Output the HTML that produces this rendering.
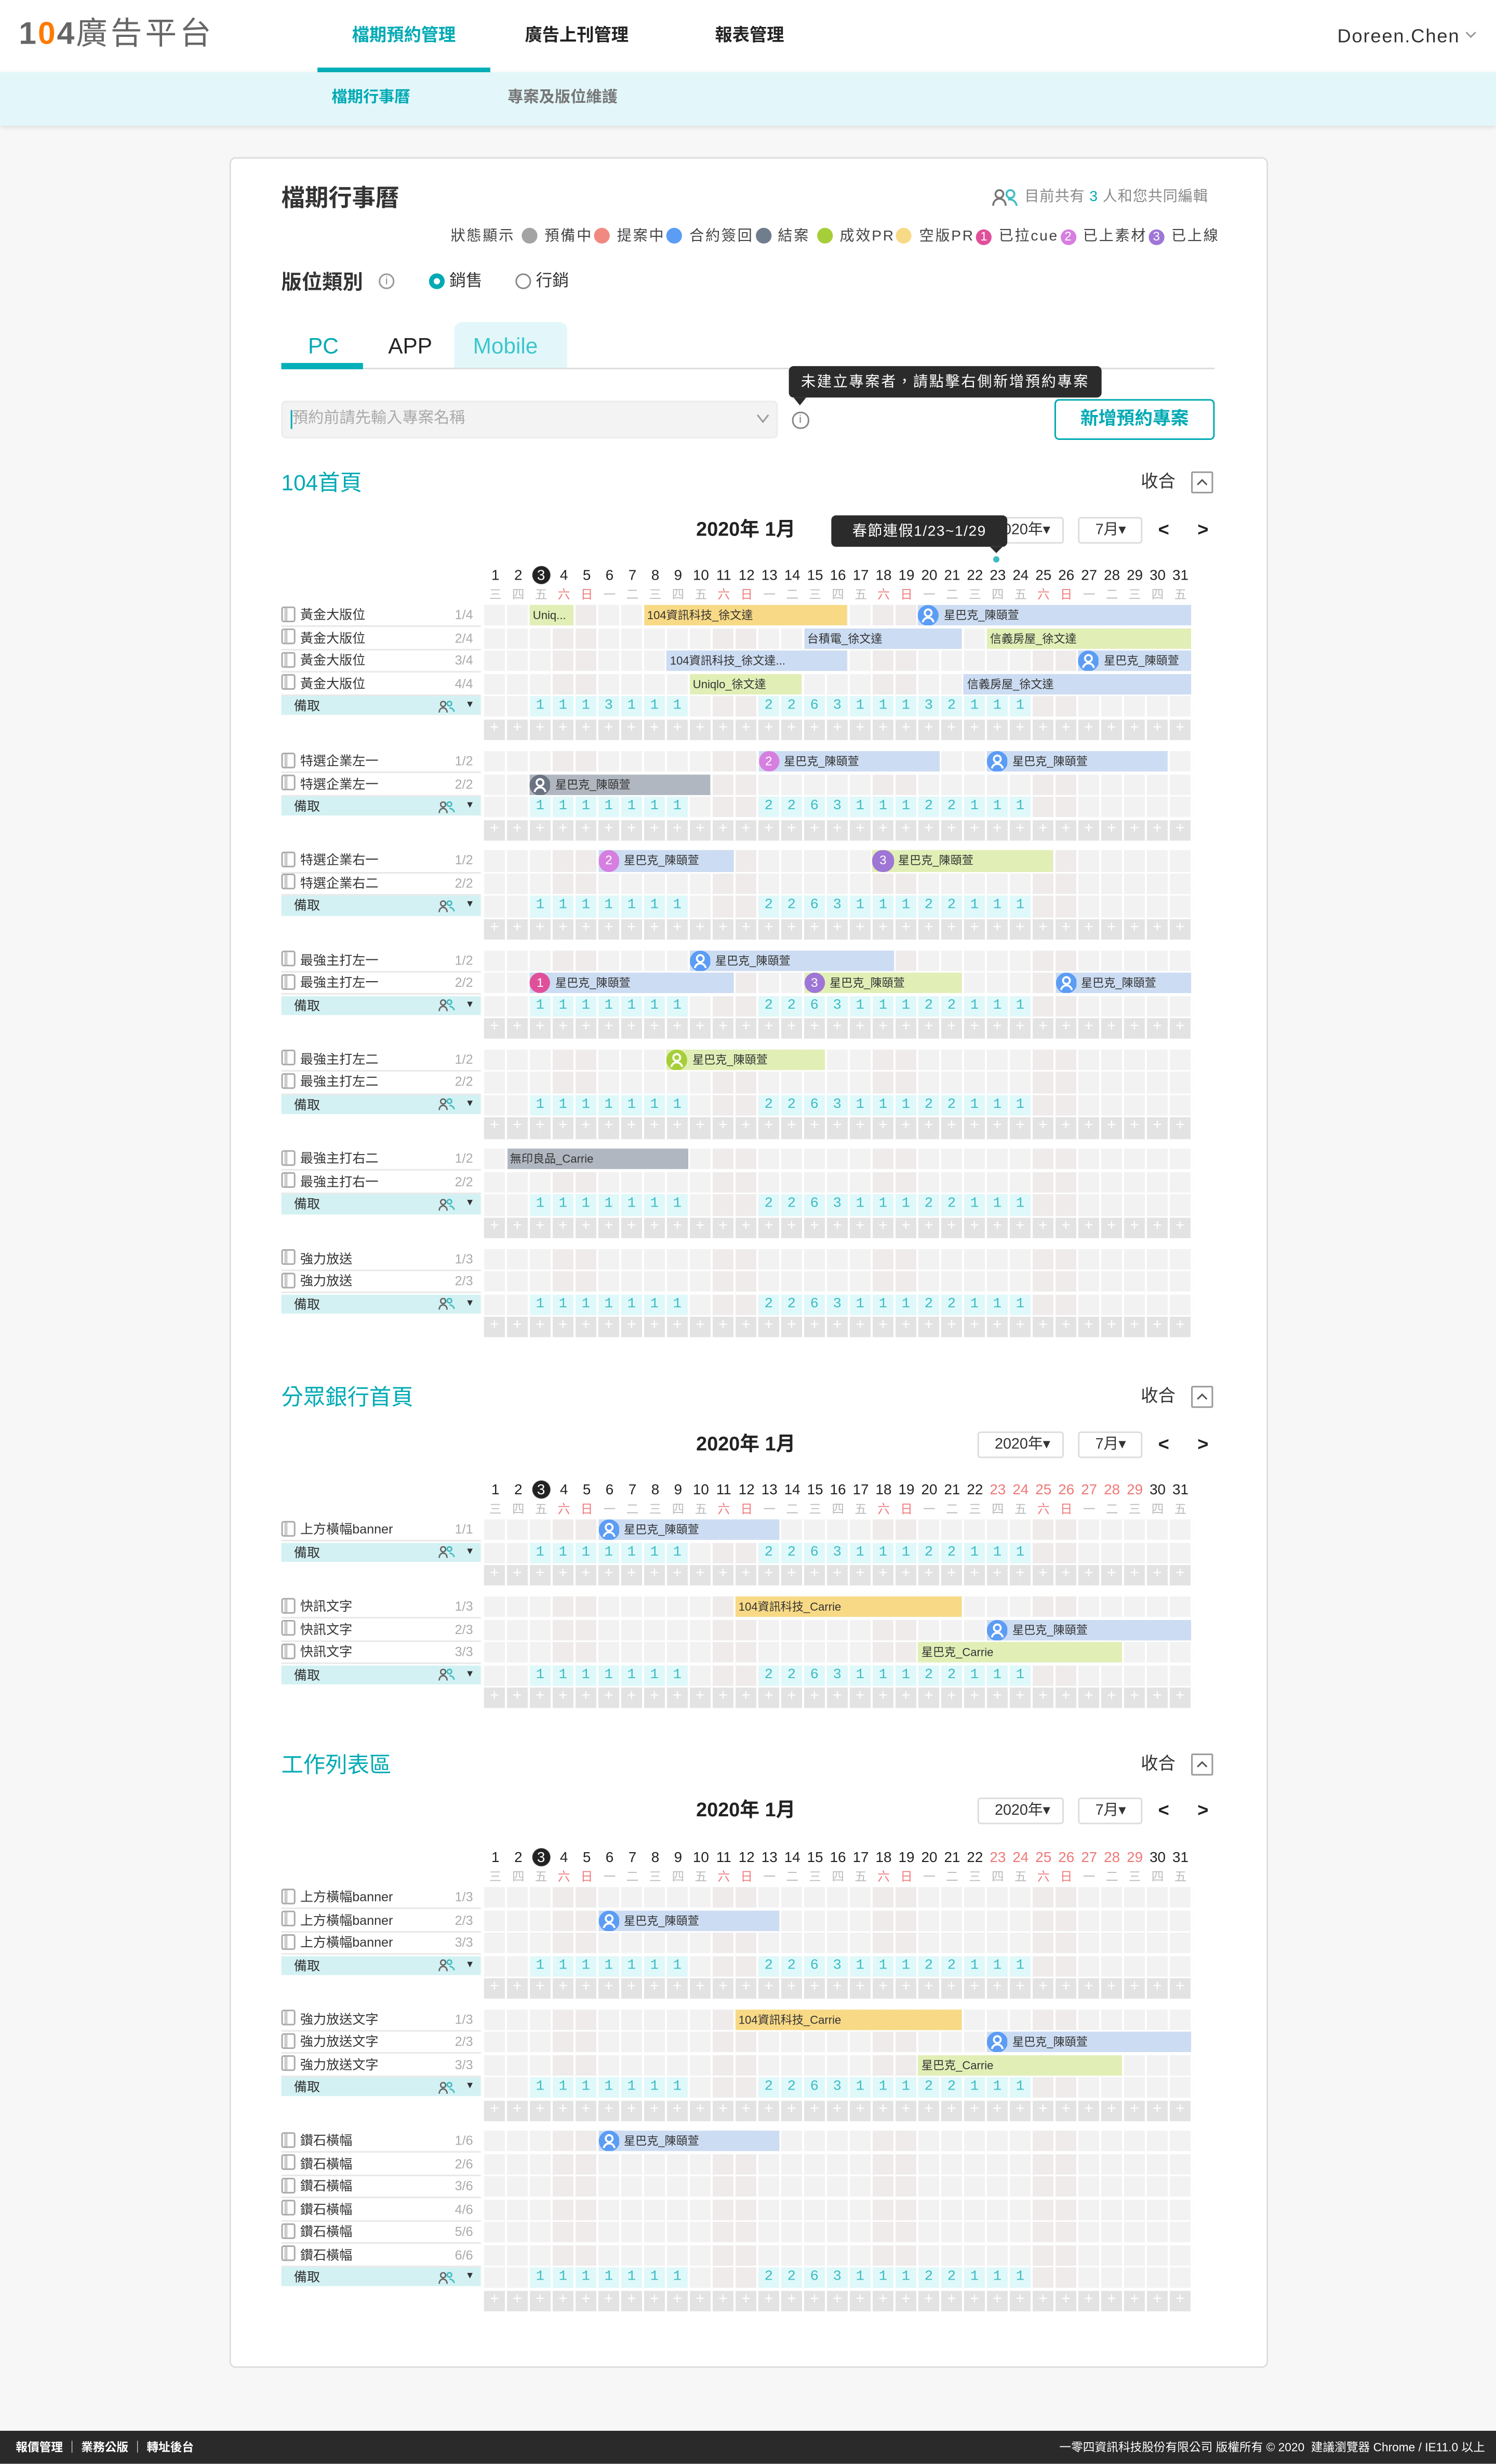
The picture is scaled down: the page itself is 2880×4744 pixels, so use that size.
<!DOCTYPE html>
<html><head><meta charset="utf-8">
<style>
html,body{margin:0;padding:0;width:2880px;height:4744px;overflow:hidden;background:#f7f7f7}
#w{position:absolute;left:0;top:0;width:952px;height:1568.2px;transform:scale(3.02521);transform-origin:0 0;background:#f7f7f7;font-family:"Liberation Sans","Noto Sans CJK TC",sans-serif;color:#333}
.a{position:absolute;white-space:nowrap}
.hdr{left:0;top:0;width:952px;height:46px;background:#fff}
.sub{left:0;top:46px;width:952px;height:34px;background:#e3f7fa;box-shadow:0 1px 3px rgba(0,0,0,.12)}
.card{left:146px;top:100px;width:659px;height:1405px;background:#fff;border:1px solid #dedede;border-radius:4px}
.foot{left:0;top:1547px;width:952px;height:21.2px;background:#2a2a2a;color:#fff;font-size:7.5px;line-height:21px}
.sect{color:#00aab4;font-size:14px;line-height:16px}
.col{font-size:11px;line-height:14px;color:#333}
.colb{width:14px;height:14px;border:1px solid #999;border-radius:1px;box-sizing:border-box;text-align:center;font-size:9px;line-height:14px;color:#666}
.mon{font-size:12.5px;line-height:16px;font-weight:bold;color:#222}
.sel{height:17px;border:1px solid #ddd;border-radius:2px;box-sizing:border-box;font-size:9.5px;line-height:15px;padding-left:10px;color:#333;background:#fff}
.arr{font-size:12px;line-height:14px;font-weight:bold;color:#222}
.dn,.wd{position:absolute;left:308px;display:flex}
.dn span,.wd span{width:14.545px;text-align:center;flex:none}
.dn{font-size:9.2px;height:12px;line-height:12px;color:#222}
.dn span.t{color:#fff;background:radial-gradient(circle at 50% 50%,#222 5.5px,transparent 6px)}
.dn span.h{color:#f07878}
.wd{font-size:7.8px;height:10px;line-height:10px;color:#bbb}
.wd span.h{color:#f07878}
.grp{position:absolute;left:179px;width:580px}
.rw{position:relative;height:14.545px}
.lb{position:absolute;left:0;top:0;width:127px;height:13.3px;border-bottom:1.245px solid #e8e8e8;font-size:8.3px;line-height:13.3px;color:#333;white-space:nowrap}
.lb .ic{display:inline-block;width:7px;height:8px;border:1px solid #aaa;border-radius:1.5px;vertical-align:-1.5px;margin-right:3px;background:linear-gradient(90deg,transparent 1px,#ccc 1px 3px,transparent 3px)}
.lb .fr{position:absolute;right:5px;top:0;color:#aaa}
.lb.bq{background:#d3f1f3;border-bottom-color:#fff;padding-left:8px;box-sizing:border-box}
.lb.bq .pi{position:absolute;right:16px;top:2.5px}
.lb.bq .dd{position:absolute;right:4px;top:0;font-size:6px}
.g{position:absolute;left:129px;top:0;width:450.9px;height:13.3px;background:repeating-linear-gradient(90deg,#f2f2f2 0 43.636px,#efebeb 43.636px 72.727px,#f2f2f2 72.727px 101.818px)}
.g::after{content:"";position:absolute;left:0;top:0;right:0;bottom:0;z-index:1;background:repeating-linear-gradient(90deg,transparent 0 13.3px,#fff 13.3px 14.545px)}
.g.p{background:#e3e3e3;color:#fff;font-family:"Liberation Mono",monospace;font-size:10px;line-height:13.3px;letter-spacing:8.545px;padding-left:3.65px;box-sizing:border-box;overflow:hidden;white-space:nowrap}
.nr{position:absolute;top:0;height:13.3px;background:#dff8fa;color:#3cbcc3;font-family:"Liberation Mono",monospace;font-size:9px;line-height:13.3px;letter-spacing:9.145px;padding-left:3.95px;box-sizing:border-box;white-space:nowrap;overflow:hidden}
.n1{left:29.09px;width:100.57px}
.n2{left:174.54px;width:173.3px}
.b{position:absolute;top:0;height:13.3px;z-index:2;left:calc((var(--s) - 1) * 14.545px);width:calc((var(--e) - var(--s) + 1) * 14.545px - 1.25px);font-size:7.3px;line-height:13.3px;padding-left:2px;box-sizing:border-box;white-space:nowrap;overflow:hidden;color:#333}
.b.i{padding-left:0}
.bl{background:#ccdcf2}.ye{background:#f8d985}.gr{background:#e1efb6}.gy{background:#b0b7c0}
.b svg,.b .bd{display:inline-block;width:13.3px;height:13.3px;vertical-align:top;margin-right:3px}
.bd{border-radius:50%;color:#fff;text-align:center;font-size:8px;line-height:13.3px}
.lg{display:inline-block;width:10px;height:10px;border-radius:50%;vertical-align:-1.5px;margin:0 1px}
.lgn{display:inline-block;width:10px;height:10px;border-radius:50%;vertical-align:baseline;color:#fff;font-size:8px;line-height:10px;text-align:center;margin:0 1px;letter-spacing:0}
</style></head><body><div id="w">

<div class="a hdr"></div>
<div class="a" style="left:12px;top:9px;font-size:20px;line-height:26px;color:#666;letter-spacing:1px"><span style="font-weight:bold">1</span><span style="font-weight:bold;color:#ff7a00">0</span><span style="font-weight:bold">4</span><span style="letter-spacing:2px">廣告平台</span></div>
<div class="a" style="left:224px;top:15px;font-size:11px;line-height:16px;color:#00aab4;font-weight:bold">檔期預約管理</div>
<div class="a" style="left:202px;top:42.5px;width:110px;height:3.5px;background:#00afb8"></div>
<div class="a" style="left:334px;top:15px;font-size:11px;line-height:16px;color:#222;font-weight:bold">廣告上刊管理</div>
<div class="a" style="left:455px;top:15px;font-size:11px;line-height:16px;color:#222;font-weight:bold">報表管理</div>
<div class="a" style="left:851px;top:15px;font-size:12px;line-height:16px;color:#333;letter-spacing:.6px">Doreen.Chen</div>
<svg class="a" style="left:932px;top:19px" width="8" height="6" viewBox="0 0 8 6"><path d="M1 1.5l3 3 3-3" fill="none" stroke="#999" stroke-width="1"/></svg>
<div class="a sub"></div>
<div class="a" style="left:211px;top:56px;font-size:10px;line-height:14px;color:#00aab4;font-weight:bold">檔期行事曆</div>
<div class="a" style="left:323px;top:56px;font-size:10px;line-height:14px;color:#777;font-weight:bold">專案及版位維護</div>

<div class="a card"></div>
<div class="a" style="left:179px;top:117px;font-size:15px;line-height:20px;color:#333;font-weight:bold">檔期行事曆</div>
<svg class="a" style="left:631px;top:120px" width="18" height="12" viewBox="0 0 18 12"><circle cx="5" cy="3.5" r="2.5" fill="none" stroke="#777" stroke-width="1.2"/><path d="M1 11c0-3 2-4.5 4-4.5s4 1.5 4 4.5" fill="none" stroke="#777" stroke-width="1.2"/><circle cx="12" cy="3.5" r="2.5" fill="none" stroke="#3cbcc3" stroke-width="1.2"/><path d="M10.5 7c2.5-.5 5 1 5.5 4" fill="none" stroke="#3cbcc3" stroke-width="1.2"/></svg>
<div class="a" style="left:652px;top:119px;font-size:9.3px;line-height:13px;color:#888;letter-spacing:.3px">目前共有 <span style="color:#00aab4">3</span> 人和您共同編輯</div>
<div class="a" style="right:176px;top:144px;font-size:9.3px;line-height:13px;color:#444;letter-spacing:.9px">狀態顯示 <span class="lg" style="background:#a3a3a3"></span> 預備中<span class="lg" style="background:#f08a80"></span> 提案中<span class="lg" style="background:#5b9cf4"></span> 合約簽回<span class="lg" style="background:#6f7d8c"></span> 結案 <span class="lg" style="background:#a6ce39"></span> 成效PR<span class="lg" style="background:#f8d985"></span> 空版PR<span class="lgn" style="background:#e0509a">1</span> 已拉cue<span class="lgn" style="background:#d67fe0">2</span> 已上素材<span class="lgn" style="background:#9e76d6">3</span> 已上線</div>

<div class="a" style="left:179px;top:171px;font-size:13px;line-height:17px;font-weight:bold;color:#333">版位類別</div>
<div class="a" style="left:241px;top:174px;width:10px;height:10px;border:1px solid #999;border-radius:50%;box-sizing:border-box;font-size:7px;line-height:9px;text-align:center;color:#888">i</div>
<div class="a" style="left:273px;top:174px;width:10px;height:10px;border:3px solid #00aab4;border-radius:50%;box-sizing:border-box"></div>
<div class="a" style="left:286px;top:172px;font-size:10.5px;line-height:14px;color:#333">銷售</div>
<div class="a" style="left:328px;top:174px;width:10px;height:10px;border:1px solid #888;border-radius:50%;box-sizing:border-box"></div>
<div class="a" style="left:341px;top:172px;font-size:10.5px;line-height:14px;color:#333">行銷</div>

<div class="a" style="left:289px;top:205px;width:72px;height:29px;background:#e3f7fa;border-radius:5px 5px 0 0"></div>
<div class="a" style="left:196px;top:211px;font-size:14px;line-height:18px;color:#00aab4">PC</div>
<div class="a" style="left:247px;top:211px;font-size:14px;line-height:18px;color:#222">APP</div>
<div class="a" style="left:301px;top:211px;font-size:14px;line-height:18px;color:#3cc6cc">Mobile</div>
<div class="a" style="left:179px;top:234px;width:594px;height:1px;background:#ddd"></div>
<div class="a" style="left:179px;top:231px;width:52px;height:3.5px;background:#00afb8"></div>

<div class="a" style="left:179px;top:255px;width:316px;height:24px;background:#f3f3f3;border:1px solid #ececec;border-radius:3px;box-sizing:border-box"></div>
<div class="a" style="left:185px;top:261px;width:1px;height:12px;background:#00aab4"></div>
<div class="a" style="left:186px;top:260px;font-size:10px;line-height:14px;color:#aaa">預約前請先輸入專案名稱</div>
<svg class="a" style="left:481px;top:263px" width="9" height="7" viewBox="0 0 9 7"><path d="M1 1l3.5 4.5L8 1" fill="none" stroke="#999" stroke-width="1"/></svg>
<div class="a" style="left:504px;top:262px;width:10.5px;height:10.5px;border:1px solid #888;border-radius:50%;box-sizing:border-box;font-size:7px;line-height:9px;text-align:center;color:#777">i</div>
<div class="a" style="left:502px;top:233px;width:199px;height:20px;background:#2b2b2b;border-radius:3px;color:#fff;font-size:9.3px;line-height:20px;text-align:center;letter-spacing:.9px">未建立專案者，請點擊右側新增預約專案</div>
<div class="a" style="left:505px;top:253px;width:0;height:0;border-left:4px solid transparent;border-right:4px solid transparent;border-top:5px solid #2b2b2b"></div>
<div class="a" style="left:671px;top:254px;width:102px;height:26px;border:1px solid #00aab4;border-radius:3px;box-sizing:border-box;font-size:11.5px;line-height:24px;text-align:center;color:#00aab4;font-weight:bold">新增預約專案</div>

<!-- SECTION 1 -->
<div class="a sect" style="left:179px;top:299px">104首頁</div>
<div class="a col" style="left:726px;top:300px">收合</div>
<div class="a colb" style="left:758px;top:300px"><svg width="8" height="6" viewBox="0 0 8 6" style="vertical-align:1px"><path d="M1 4.5l3-3 3 3" fill="none" stroke="#555" stroke-width="1"/></svg></div>
<div class="a mon" style="left:443px;top:329px">2020年 1月</div>
<div class="a sel" style="left:622px;top:329px;width:55px">2020年▾</div>
<div class="a sel" style="left:686px;top:329px;width:41px">7月▾</div>
<div class="a arr" style="left:737px;top:330px">&lt;</div>
<div class="a arr" style="left:762px;top:330px">&gt;</div>
<div class="a" style="left:529px;top:328px;width:112px;height:20px;background:#2b2b2b;border-radius:3px;color:#fff;font-size:9.3px;line-height:20px;text-align:center;letter-spacing:.5px">春節連假1/23~1/29</div>
<div class="a" style="left:630px;top:348px;width:0;height:0;border-left:4px solid transparent;border-right:4px solid transparent;border-top:4px solid #2b2b2b"></div>
<div class="a" style="left:632px;top:354px;width:4px;height:4px;border-radius:50%;background:#3cbcc3"></div>

<div class="dn" style="top:360px"><span>1</span><span>2</span><span class="t">3</span><span>4</span><span>5</span><span>6</span><span>7</span><span>8</span><span>9</span><span>10</span><span>11</span><span>12</span><span>13</span><span>14</span><span>15</span><span>16</span><span>17</span><span>18</span><span>19</span><span>20</span><span>21</span><span>22</span><span>23</span><span>24</span><span>25</span><span>26</span><span>27</span><span>28</span><span>29</span><span>30</span><span>31</span></div>
<div class="wd" style="top:374px"><span>三</span><span>四</span><span>五</span><span class="h">六</span><span class="h">日</span><span>一</span><span>二</span><span>三</span><span>四</span><span>五</span><span class="h">六</span><span class="h">日</span><span>一</span><span>二</span><span>三</span><span>四</span><span>五</span><span class="h">六</span><span class="h">日</span><span>一</span><span>二</span><span>三</span><span>四</span><span>五</span><span class="h">六</span><span class="h">日</span><span>一</span><span>二</span><span>三</span><span>四</span><span>五</span></div>

<div class="grp" style="top:385px">
<div class="rw"><div class="lb"><i class="ic"></i>黃金大版位<span class="fr">1/4</span></div><div class="g">
<div class="b gr" style="--s:3;--e:4">Uniq...</div>
<div class="b ye" style="--s:8;--e:16">104資訊科技_徐文達</div>
<div class="b bl i" style="--s:20;--e:31"><svg viewBox="0 0 14 14" style="color:#5b9cf4"><circle cx="7" cy="7" r="7" fill="currentColor"/><circle cx="7" cy="5.3" r="2.3" fill="none" stroke="#fff" stroke-width="1.3"/><path d="M3.3 11.6C4 9.4 5.4 8.6 7 8.6s3 .8 3.7 3" fill="none" stroke="#fff" stroke-width="1.3"/></svg>星巴克_陳頤萱</div>
</div></div>
<div class="rw"><div class="lb"><i class="ic"></i>黃金大版位<span class="fr">2/4</span></div><div class="g">
<div class="b bl" style="--s:15;--e:21">台積電_徐文達</div>
<div class="b gr" style="--s:23;--e:31">信義房屋_徐文達</div>
</div></div>
<div class="rw"><div class="lb"><i class="ic"></i>黃金大版位<span class="fr">3/4</span></div><div class="g">
<div class="b bl" style="--s:9;--e:16">104資訊科技_徐文達...</div>
<div class="b bl i" style="--s:27;--e:31"><svg viewBox="0 0 14 14" style="color:#5b9cf4"><circle cx="7" cy="7" r="7" fill="currentColor"/><circle cx="7" cy="5.3" r="2.3" fill="none" stroke="#fff" stroke-width="1.3"/><path d="M3.3 11.6C4 9.4 5.4 8.6 7 8.6s3 .8 3.7 3" fill="none" stroke="#fff" stroke-width="1.3"/></svg>星巴克_陳頤萱</div>
</div></div>
<div class="rw"><div class="lb"><i class="ic"></i>黃金大版位<span class="fr">4/4</span></div><div class="g">
<div class="b gr" style="--s:10;--e:14">Uniqlo_徐文達</div>
<div class="b bl" style="--s:22;--e:31">信義房屋_徐文達</div>
</div></div>
<div class="rw"><div class="lb bq">備取<svg class="pi" width="11" height="8" viewBox="0 0 11 8"><circle cx="3" cy="2" r="1.6" fill="none" stroke="#666" stroke-width=".9"/><path d="M.5 7.5c0-2 1.2-3 2.5-3s2.5 1 2.5 3" fill="none" stroke="#666" stroke-width=".9"/><circle cx="7" cy="1.8" r="1.4" fill="none" stroke="#3cbcc3" stroke-width=".9"/><path d="M7 4.5c1.5 0 2.8 1 3 2.5" fill="none" stroke="#3cbcc3" stroke-width=".9"/></svg><span class="dd">▼</span></div><div class="g"><div class="nr n1">1113111</div><div class="nr n2">226311132111</div></div></div>
<div class="rw"><div class="g p">+++++++++++++++++++++++++++++++</div></div>
</div>

<div class="grp" style="top:478px">
<div class="rw"><div class="lb"><i class="ic"></i>特選企業左一<span class="fr">1/2</span></div><div class="g">
<div class="b bl i" style="--s:13;--e:20"><span class="bd" style="background:#d67fe0">2</span>星巴克_陳頤萱</div>
<div class="b bl i" style="--s:23;--e:30"><svg viewBox="0 0 14 14" style="color:#5b9cf4"><circle cx="7" cy="7" r="7" fill="currentColor"/><circle cx="7" cy="5.3" r="2.3" fill="none" stroke="#fff" stroke-width="1.3"/><path d="M3.3 11.6C4 9.4 5.4 8.6 7 8.6s3 .8 3.7 3" fill="none" stroke="#fff" stroke-width="1.3"/></svg>星巴克_陳頤萱</div>
</div></div>
<div class="rw"><div class="lb"><i class="ic"></i>特選企業左一<span class="fr">2/2</span></div><div class="g">
<div class="b gy i" style="--s:3;--e:10"><svg viewBox="0 0 14 14" style="color:#6b7383"><circle cx="7" cy="7" r="7" fill="currentColor"/><circle cx="7" cy="5.3" r="2.3" fill="none" stroke="#fff" stroke-width="1.3"/><path d="M3.3 11.6C4 9.4 5.4 8.6 7 8.6s3 .8 3.7 3" fill="none" stroke="#fff" stroke-width="1.3"/></svg>星巴克_陳頤萱</div>
</div></div>
<div class="rw"><div class="lb bq">備取<svg class="pi" width="11" height="8" viewBox="0 0 11 8"><circle cx="3" cy="2" r="1.6" fill="none" stroke="#666" stroke-width=".9"/><path d="M.5 7.5c0-2 1.2-3 2.5-3s2.5 1 2.5 3" fill="none" stroke="#666" stroke-width=".9"/><circle cx="7" cy="1.8" r="1.4" fill="none" stroke="#3cbcc3" stroke-width=".9"/><path d="M7 4.5c1.5 0 2.8 1 3 2.5" fill="none" stroke="#3cbcc3" stroke-width=".9"/></svg><span class="dd">▼</span></div><div class="g"><div class="nr n1">1111111</div><div class="nr n2">226311122111</div></div></div>
<div class="rw"><div class="g p">+++++++++++++++++++++++++++++++</div></div>
</div>

<div class="grp" style="top:541.3px">
<div class="rw"><div class="lb"><i class="ic"></i>特選企業右一<span class="fr">1/2</span></div><div class="g">
<div class="b bl i" style="--s:6;--e:11"><span class="bd" style="background:#d67fe0">2</span>星巴克_陳頤萱</div>
<div class="b gr i" style="--s:18;--e:25"><span class="bd" style="background:#9e76d6">3</span>星巴克_陳頤萱</div>
</div></div>
<div class="rw"><div class="lb"><i class="ic"></i>特選企業右二<span class="fr">2/2</span></div><div class="g"></div></div>
<div class="rw"><div class="lb bq">備取<svg class="pi" width="11" height="8" viewBox="0 0 11 8"><circle cx="3" cy="2" r="1.6" fill="none" stroke="#666" stroke-width=".9"/><path d="M.5 7.5c0-2 1.2-3 2.5-3s2.5 1 2.5 3" fill="none" stroke="#666" stroke-width=".9"/><circle cx="7" cy="1.8" r="1.4" fill="none" stroke="#3cbcc3" stroke-width=".9"/><path d="M7 4.5c1.5 0 2.8 1 3 2.5" fill="none" stroke="#3cbcc3" stroke-width=".9"/></svg><span class="dd">▼</span></div><div class="g"><div class="nr n1">1111111</div><div class="nr n2">226311122111</div></div></div>
<div class="rw"><div class="g p">+++++++++++++++++++++++++++++++</div></div>
</div>

<div class="grp" style="top:604.6px">
<div class="rw"><div class="lb"><i class="ic"></i>最強主打左一<span class="fr">1/2</span></div><div class="g">
<div class="b bl i" style="--s:10;--e:18"><svg viewBox="0 0 14 14" style="color:#5b9cf4"><circle cx="7" cy="7" r="7" fill="currentColor"/><circle cx="7" cy="5.3" r="2.3" fill="none" stroke="#fff" stroke-width="1.3"/><path d="M3.3 11.6C4 9.4 5.4 8.6 7 8.6s3 .8 3.7 3" fill="none" stroke="#fff" stroke-width="1.3"/></svg>星巴克_陳頤萱</div>
</div></div>
<div class="rw"><div class="lb"><i class="ic"></i>最強主打左一<span class="fr">2/2</span></div><div class="g">
<div class="b bl i" style="--s:3;--e:11"><span class="bd" style="background:#e0509a">1</span>星巴克_陳頤萱</div>
<div class="b gr i" style="--s:15;--e:21"><span class="bd" style="background:#9e76d6">3</span>星巴克_陳頤萱</div>
<div class="b bl i" style="--s:26;--e:31"><svg viewBox="0 0 14 14" style="color:#5b9cf4"><circle cx="7" cy="7" r="7" fill="currentColor"/><circle cx="7" cy="5.3" r="2.3" fill="none" stroke="#fff" stroke-width="1.3"/><path d="M3.3 11.6C4 9.4 5.4 8.6 7 8.6s3 .8 3.7 3" fill="none" stroke="#fff" stroke-width="1.3"/></svg>星巴克_陳頤萱</div>
</div></div>
<div class="rw"><div class="lb bq">備取<svg class="pi" width="11" height="8" viewBox="0 0 11 8"><circle cx="3" cy="2" r="1.6" fill="none" stroke="#666" stroke-width=".9"/><path d="M.5 7.5c0-2 1.2-3 2.5-3s2.5 1 2.5 3" fill="none" stroke="#666" stroke-width=".9"/><circle cx="7" cy="1.8" r="1.4" fill="none" stroke="#3cbcc3" stroke-width=".9"/><path d="M7 4.5c1.5 0 2.8 1 3 2.5" fill="none" stroke="#3cbcc3" stroke-width=".9"/></svg><span class="dd">▼</span></div><div class="g"><div class="nr n1">1111111</div><div class="nr n2">226311122111</div></div></div>
<div class="rw"><div class="g p">+++++++++++++++++++++++++++++++</div></div>
</div>

<div class="grp" style="top:667.9px">
<div class="rw"><div class="lb"><i class="ic"></i>最強主打左二<span class="fr">1/2</span></div><div class="g">
<div class="b gr i" style="--s:9;--e:15"><svg viewBox="0 0 14 14" style="color:#a6ce39"><circle cx="7" cy="7" r="7" fill="currentColor"/><circle cx="7" cy="5.3" r="2.3" fill="none" stroke="#fff" stroke-width="1.3"/><path d="M3.3 11.6C4 9.4 5.4 8.6 7 8.6s3 .8 3.7 3" fill="none" stroke="#fff" stroke-width="1.3"/></svg>星巴克_陳頤萱</div>
</div></div>
<div class="rw"><div class="lb"><i class="ic"></i>最強主打左二<span class="fr">2/2</span></div><div class="g"></div></div>
<div class="rw"><div class="lb bq">備取<svg class="pi" width="11" height="8" viewBox="0 0 11 8"><circle cx="3" cy="2" r="1.6" fill="none" stroke="#666" stroke-width=".9"/><path d="M.5 7.5c0-2 1.2-3 2.5-3s2.5 1 2.5 3" fill="none" stroke="#666" stroke-width=".9"/><circle cx="7" cy="1.8" r="1.4" fill="none" stroke="#3cbcc3" stroke-width=".9"/><path d="M7 4.5c1.5 0 2.8 1 3 2.5" fill="none" stroke="#3cbcc3" stroke-width=".9"/></svg><span class="dd">▼</span></div><div class="g"><div class="nr n1">1111111</div><div class="nr n2">226311122111</div></div></div>
<div class="rw"><div class="g p">+++++++++++++++++++++++++++++++</div></div>
</div>

<div class="grp" style="top:731.2px">
<div class="rw"><div class="lb"><i class="ic"></i>最強主打右二<span class="fr">1/2</span></div><div class="g">
<div class="b gy" style="--s:2;--e:9">無印良品_Carrie</div>
</div></div>
<div class="rw"><div class="lb"><i class="ic"></i>最強主打右一<span class="fr">2/2</span></div><div class="g"></div></div>
<div class="rw"><div class="lb bq">備取<svg class="pi" width="11" height="8" viewBox="0 0 11 8"><circle cx="3" cy="2" r="1.6" fill="none" stroke="#666" stroke-width=".9"/><path d="M.5 7.5c0-2 1.2-3 2.5-3s2.5 1 2.5 3" fill="none" stroke="#666" stroke-width=".9"/><circle cx="7" cy="1.8" r="1.4" fill="none" stroke="#3cbcc3" stroke-width=".9"/><path d="M7 4.5c1.5 0 2.8 1 3 2.5" fill="none" stroke="#3cbcc3" stroke-width=".9"/></svg><span class="dd">▼</span></div><div class="g"><div class="nr n1">1111111</div><div class="nr n2">226311122111</div></div></div>
<div class="rw"><div class="g p">+++++++++++++++++++++++++++++++</div></div>
</div>

<div class="grp" style="top:794.5px">
<div class="rw"><div class="lb"><i class="ic"></i>強力放送<span class="fr">1/3</span></div><div class="g"></div></div>
<div class="rw"><div class="lb"><i class="ic"></i>強力放送<span class="fr">2/3</span></div><div class="g"></div></div>
<div class="rw"><div class="lb bq">備取<svg class="pi" width="11" height="8" viewBox="0 0 11 8"><circle cx="3" cy="2" r="1.6" fill="none" stroke="#666" stroke-width=".9"/><path d="M.5 7.5c0-2 1.2-3 2.5-3s2.5 1 2.5 3" fill="none" stroke="#666" stroke-width=".9"/><circle cx="7" cy="1.8" r="1.4" fill="none" stroke="#3cbcc3" stroke-width=".9"/><path d="M7 4.5c1.5 0 2.8 1 3 2.5" fill="none" stroke="#3cbcc3" stroke-width=".9"/></svg><span class="dd">▼</span></div><div class="g"><div class="nr n1">1111111</div><div class="nr n2">226311122111</div></div></div>
<div class="rw"><div class="g p">+++++++++++++++++++++++++++++++</div></div>
</div>

<!-- SECTION 2 -->
<div class="a sect" style="left:179px;top:881px">分眾銀行首頁</div>
<div class="a col" style="left:726px;top:882px">收合</div>
<div class="a colb" style="left:758px;top:882px"><svg width="8" height="6" viewBox="0 0 8 6" style="vertical-align:1px"><path d="M1 4.5l3-3 3 3" fill="none" stroke="#555" stroke-width="1"/></svg></div>
<div class="a mon" style="left:443px;top:911px">2020年 1月</div>
<div class="a sel" style="left:622px;top:911px;width:55px">2020年▾</div>
<div class="a sel" style="left:686px;top:911px;width:41px">7月▾</div>
<div class="a arr" style="left:737px;top:912px">&lt;</div>
<div class="a arr" style="left:762px;top:912px">&gt;</div>
<div class="dn" style="top:942px"><span>1</span><span>2</span><span class="t">3</span><span>4</span><span>5</span><span>6</span><span>7</span><span>8</span><span>9</span><span>10</span><span>11</span><span>12</span><span>13</span><span>14</span><span>15</span><span>16</span><span>17</span><span>18</span><span>19</span><span>20</span><span>21</span><span>22</span><span class="h">23</span><span class="h">24</span><span class="h">25</span><span class="h">26</span><span class="h">27</span><span class="h">28</span><span class="h">29</span><span>30</span><span>31</span></div>
<div class="wd" style="top:956px"><span>三</span><span>四</span><span>五</span><span class="h">六</span><span class="h">日</span><span>一</span><span>二</span><span>三</span><span>四</span><span>五</span><span class="h">六</span><span class="h">日</span><span>一</span><span>二</span><span>三</span><span>四</span><span>五</span><span class="h">六</span><span class="h">日</span><span>一</span><span>二</span><span>三</span><span>四</span><span>五</span><span class="h">六</span><span class="h">日</span><span>一</span><span>二</span><span>三</span><span>四</span><span>五</span></div>

<div class="grp" style="top:967px">
<div class="rw"><div class="lb"><i class="ic"></i>上方橫幅banner<span class="fr">1/1</span></div><div class="g">
<div class="b bl i" style="--s:6;--e:13"><svg viewBox="0 0 14 14" style="color:#5b9cf4"><circle cx="7" cy="7" r="7" fill="currentColor"/><circle cx="7" cy="5.3" r="2.3" fill="none" stroke="#fff" stroke-width="1.3"/><path d="M3.3 11.6C4 9.4 5.4 8.6 7 8.6s3 .8 3.7 3" fill="none" stroke="#fff" stroke-width="1.3"/></svg>星巴克_陳頤萱</div>
</div></div>
<div class="rw"><div class="lb bq">備取<svg class="pi" width="11" height="8" viewBox="0 0 11 8"><circle cx="3" cy="2" r="1.6" fill="none" stroke="#666" stroke-width=".9"/><path d="M.5 7.5c0-2 1.2-3 2.5-3s2.5 1 2.5 3" fill="none" stroke="#666" stroke-width=".9"/><circle cx="7" cy="1.8" r="1.4" fill="none" stroke="#3cbcc3" stroke-width=".9"/><path d="M7 4.5c1.5 0 2.8 1 3 2.5" fill="none" stroke="#3cbcc3" stroke-width=".9"/></svg><span class="dd">▼</span></div><div class="g"><div class="nr n1">1111111</div><div class="nr n2">226311122111</div></div></div>
<div class="rw"><div class="g p">+++++++++++++++++++++++++++++++</div></div>
</div>

<div class="grp" style="top:1016px">
<div class="rw"><div class="lb"><i class="ic"></i>快訊文字<span class="fr">1/3</span></div><div class="g">
<div class="b ye" style="--s:12;--e:21">104資訊科技_Carrie</div>
</div></div>
<div class="rw"><div class="lb"><i class="ic"></i>快訊文字<span class="fr">2/3</span></div><div class="g">
<div class="b bl i" style="--s:23;--e:31"><svg viewBox="0 0 14 14" style="color:#5b9cf4"><circle cx="7" cy="7" r="7" fill="currentColor"/><circle cx="7" cy="5.3" r="2.3" fill="none" stroke="#fff" stroke-width="1.3"/><path d="M3.3 11.6C4 9.4 5.4 8.6 7 8.6s3 .8 3.7 3" fill="none" stroke="#fff" stroke-width="1.3"/></svg>星巴克_陳頤萱</div>
</div></div>
<div class="rw"><div class="lb"><i class="ic"></i>快訊文字<span class="fr">3/3</span></div><div class="g">
<div class="b gr" style="--s:20;--e:28">星巴克_Carrie</div>
</div></div>
<div class="rw"><div class="lb bq">備取<svg class="pi" width="11" height="8" viewBox="0 0 11 8"><circle cx="3" cy="2" r="1.6" fill="none" stroke="#666" stroke-width=".9"/><path d="M.5 7.5c0-2 1.2-3 2.5-3s2.5 1 2.5 3" fill="none" stroke="#666" stroke-width=".9"/><circle cx="7" cy="1.8" r="1.4" fill="none" stroke="#3cbcc3" stroke-width=".9"/><path d="M7 4.5c1.5 0 2.8 1 3 2.5" fill="none" stroke="#3cbcc3" stroke-width=".9"/></svg><span class="dd">▼</span></div><div class="g"><div class="nr n1">1111111</div><div class="nr n2">226311122111</div></div></div>
<div class="rw"><div class="g p">+++++++++++++++++++++++++++++++</div></div>
</div>

<!-- SECTION 3 -->
<div class="a sect" style="left:179px;top:1115px">工作列表區</div>
<div class="a col" style="left:726px;top:1116px">收合</div>
<div class="a colb" style="left:758px;top:1116px"><svg width="8" height="6" viewBox="0 0 8 6" style="vertical-align:1px"><path d="M1 4.5l3-3 3 3" fill="none" stroke="#555" stroke-width="1"/></svg></div>
<div class="a mon" style="left:443px;top:1144px">2020年 1月</div>
<div class="a sel" style="left:622px;top:1144px;width:55px">2020年▾</div>
<div class="a sel" style="left:686px;top:1144px;width:41px">7月▾</div>
<div class="a arr" style="left:737px;top:1145px">&lt;</div>
<div class="a arr" style="left:762px;top:1145px">&gt;</div>
<div class="dn" style="top:1176px"><span>1</span><span>2</span><span class="t">3</span><span>4</span><span>5</span><span>6</span><span>7</span><span>8</span><span>9</span><span>10</span><span>11</span><span>12</span><span>13</span><span>14</span><span>15</span><span>16</span><span>17</span><span>18</span><span>19</span><span>20</span><span>21</span><span>22</span><span class="h">23</span><span class="h">24</span><span class="h">25</span><span class="h">26</span><span class="h">27</span><span class="h">28</span><span class="h">29</span><span>30</span><span>31</span></div>
<div class="wd" style="top:1190px"><span>三</span><span>四</span><span>五</span><span class="h">六</span><span class="h">日</span><span>一</span><span>二</span><span>三</span><span>四</span><span>五</span><span class="h">六</span><span class="h">日</span><span>一</span><span>二</span><span>三</span><span>四</span><span>五</span><span class="h">六</span><span class="h">日</span><span>一</span><span>二</span><span>三</span><span>四</span><span>五</span><span class="h">六</span><span class="h">日</span><span>一</span><span>二</span><span>三</span><span>四</span><span>五</span></div>

<div class="grp" style="top:1201px">
<div class="rw"><div class="lb"><i class="ic"></i>上方橫幅banner<span class="fr">1/3</span></div><div class="g"></div></div>
<div class="rw"><div class="lb"><i class="ic"></i>上方橫幅banner<span class="fr">2/3</span></div><div class="g">
<div class="b bl i" style="--s:6;--e:13"><svg viewBox="0 0 14 14" style="color:#5b9cf4"><circle cx="7" cy="7" r="7" fill="currentColor"/><circle cx="7" cy="5.3" r="2.3" fill="none" stroke="#fff" stroke-width="1.3"/><path d="M3.3 11.6C4 9.4 5.4 8.6 7 8.6s3 .8 3.7 3" fill="none" stroke="#fff" stroke-width="1.3"/></svg>星巴克_陳頤萱</div>
</div></div>
<div class="rw"><div class="lb"><i class="ic"></i>上方橫幅banner<span class="fr">3/3</span></div><div class="g"></div></div>
<div class="rw"><div class="lb bq">備取<svg class="pi" width="11" height="8" viewBox="0 0 11 8"><circle cx="3" cy="2" r="1.6" fill="none" stroke="#666" stroke-width=".9"/><path d="M.5 7.5c0-2 1.2-3 2.5-3s2.5 1 2.5 3" fill="none" stroke="#666" stroke-width=".9"/><circle cx="7" cy="1.8" r="1.4" fill="none" stroke="#3cbcc3" stroke-width=".9"/><path d="M7 4.5c1.5 0 2.8 1 3 2.5" fill="none" stroke="#3cbcc3" stroke-width=".9"/></svg><span class="dd">▼</span></div><div class="g"><div class="nr n1">1111111</div><div class="nr n2">226311122111</div></div></div>
<div class="rw"><div class="g p">+++++++++++++++++++++++++++++++</div></div>
</div>

<div class="grp" style="top:1278.5px">
<div class="rw"><div class="lb"><i class="ic"></i>強力放送文字<span class="fr">1/3</span></div><div class="g">
<div class="b ye" style="--s:12;--e:21">104資訊科技_Carrie</div>
</div></div>
<div class="rw"><div class="lb"><i class="ic"></i>強力放送文字<span class="fr">2/3</span></div><div class="g">
<div class="b bl i" style="--s:23;--e:31"><svg viewBox="0 0 14 14" style="color:#5b9cf4"><circle cx="7" cy="7" r="7" fill="currentColor"/><circle cx="7" cy="5.3" r="2.3" fill="none" stroke="#fff" stroke-width="1.3"/><path d="M3.3 11.6C4 9.4 5.4 8.6 7 8.6s3 .8 3.7 3" fill="none" stroke="#fff" stroke-width="1.3"/></svg>星巴克_陳頤萱</div>
</div></div>
<div class="rw"><div class="lb"><i class="ic"></i>強力放送文字<span class="fr">3/3</span></div><div class="g">
<div class="b gr" style="--s:20;--e:28">星巴克_Carrie</div>
</div></div>
<div class="rw"><div class="lb bq">備取<svg class="pi" width="11" height="8" viewBox="0 0 11 8"><circle cx="3" cy="2" r="1.6" fill="none" stroke="#666" stroke-width=".9"/><path d="M.5 7.5c0-2 1.2-3 2.5-3s2.5 1 2.5 3" fill="none" stroke="#666" stroke-width=".9"/><circle cx="7" cy="1.8" r="1.4" fill="none" stroke="#3cbcc3" stroke-width=".9"/><path d="M7 4.5c1.5 0 2.8 1 3 2.5" fill="none" stroke="#3cbcc3" stroke-width=".9"/></svg><span class="dd">▼</span></div><div class="g"><div class="nr n1">1111111</div><div class="nr n2">226311122111</div></div></div>
<div class="rw"><div class="g p">+++++++++++++++++++++++++++++++</div></div>
</div>

<div class="grp" style="top:1356px">
<div class="rw"><div class="lb"><i class="ic"></i>鑽石橫幅<span class="fr">1/6</span></div><div class="g">
<div class="b bl i" style="--s:6;--e:13"><svg viewBox="0 0 14 14" style="color:#5b9cf4"><circle cx="7" cy="7" r="7" fill="currentColor"/><circle cx="7" cy="5.3" r="2.3" fill="none" stroke="#fff" stroke-width="1.3"/><path d="M3.3 11.6C4 9.4 5.4 8.6 7 8.6s3 .8 3.7 3" fill="none" stroke="#fff" stroke-width="1.3"/></svg>星巴克_陳頤萱</div>
</div></div>
<div class="rw"><div class="lb"><i class="ic"></i>鑽石橫幅<span class="fr">2/6</span></div><div class="g"></div></div>
<div class="rw"><div class="lb"><i class="ic"></i>鑽石橫幅<span class="fr">3/6</span></div><div class="g"></div></div>
<div class="rw"><div class="lb"><i class="ic"></i>鑽石橫幅<span class="fr">4/6</span></div><div class="g"></div></div>
<div class="rw"><div class="lb"><i class="ic"></i>鑽石橫幅<span class="fr">5/6</span></div><div class="g"></div></div>
<div class="rw"><div class="lb"><i class="ic"></i>鑽石橫幅<span class="fr">6/6</span></div><div class="g"></div></div>
<div class="rw"><div class="lb bq">備取<svg class="pi" width="11" height="8" viewBox="0 0 11 8"><circle cx="3" cy="2" r="1.6" fill="none" stroke="#666" stroke-width=".9"/><path d="M.5 7.5c0-2 1.2-3 2.5-3s2.5 1 2.5 3" fill="none" stroke="#666" stroke-width=".9"/><circle cx="7" cy="1.8" r="1.4" fill="none" stroke="#3cbcc3" stroke-width=".9"/><path d="M7 4.5c1.5 0 2.8 1 3 2.5" fill="none" stroke="#3cbcc3" stroke-width=".9"/></svg><span class="dd">▼</span></div><div class="g"><div class="nr n1">1111111</div><div class="nr n2">226311122111</div></div></div>
<div class="rw"><div class="g p">+++++++++++++++++++++++++++++++</div></div>
</div>

<div class="a foot"><span style="position:absolute;left:10px;font-weight:bold">報價管理 ｜ 業務公版 ｜ 轉址後台</span><span style="position:absolute;right:7px">一零四資訊科技股份有限公司 版權所有 © 2020 &nbsp;建議瀏覽器 Chrome / IE11.0 以上</span></div>

</div></body></html>
